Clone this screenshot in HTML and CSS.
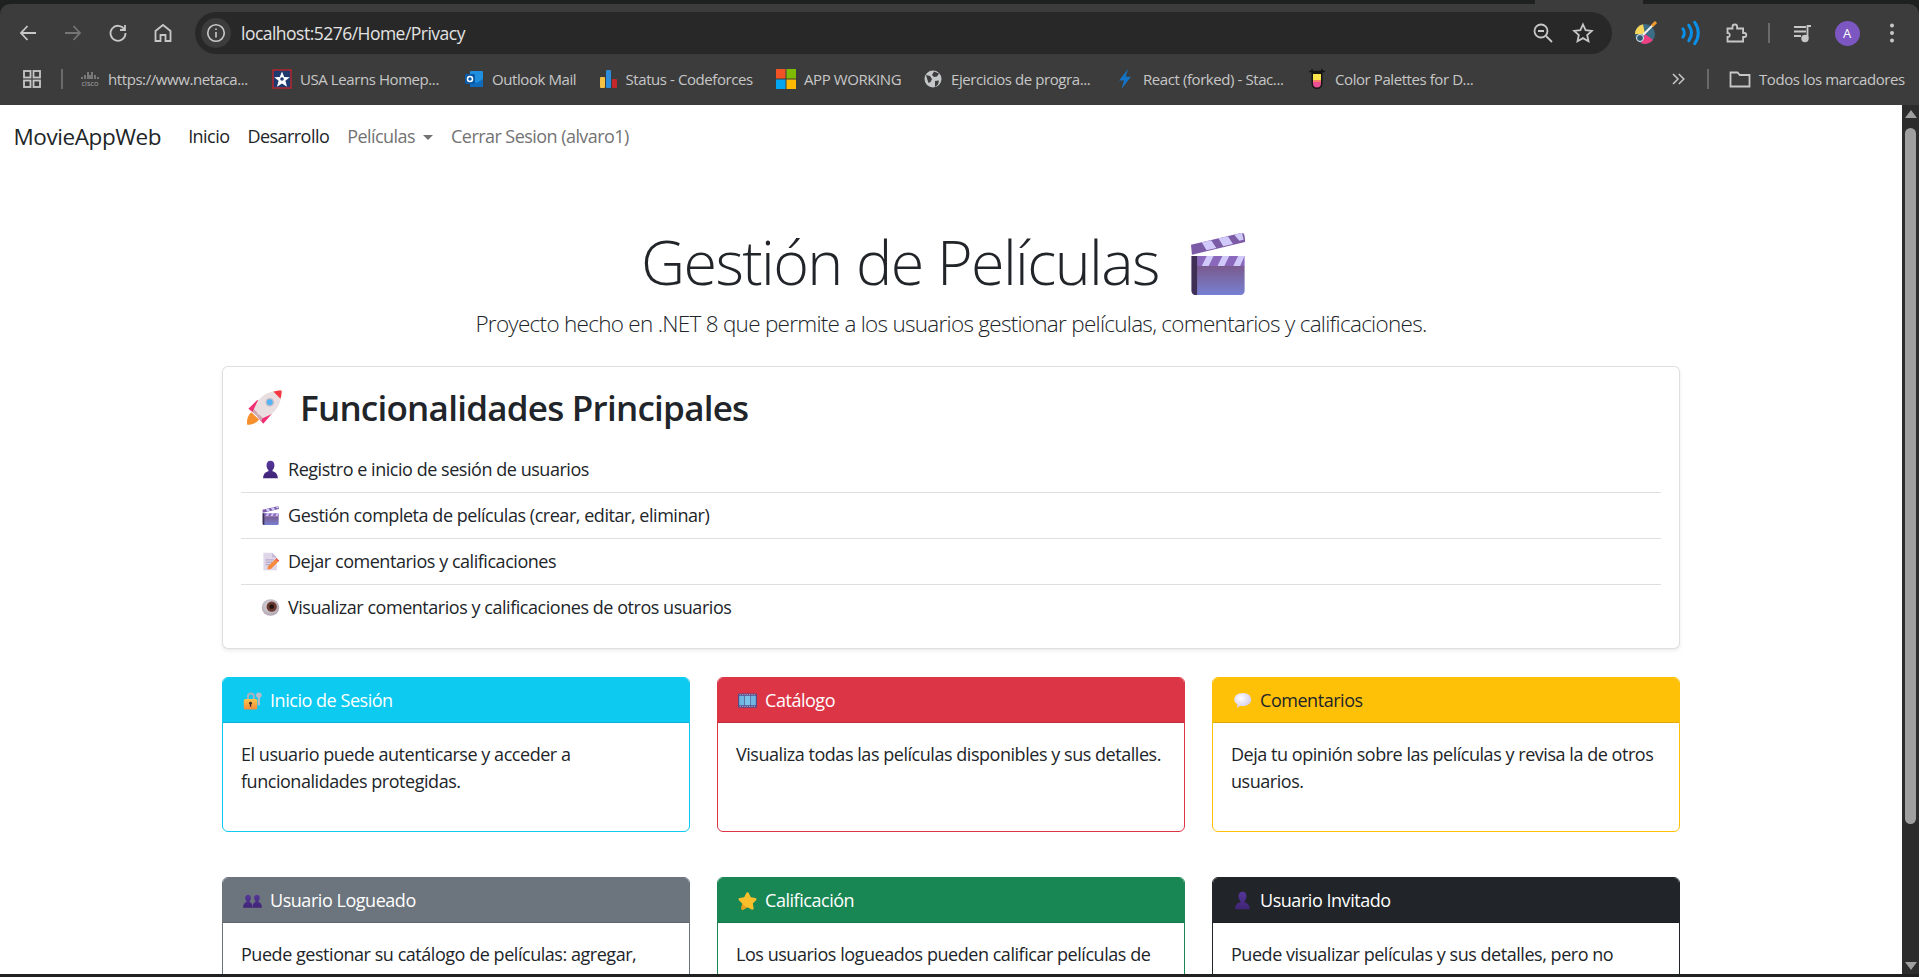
FILE: index.html
```html
<!DOCTYPE html>
<html lang="es">
<head>
    <meta charset="UTF-8">
    <meta name="viewport" content="width=device-width, initial-scale=1.0">
    <title>MovieAppWeb</title>
    <link rel="stylesheet" href="styles.css">
</head>
<body>

<!-- emoji drawings, used all over the page -->
<svg class="sprite" aria-hidden="true">
    <defs>
        <linearGradient id="clapBody" x1="0" y1="0" x2="0" y2="1">
            <stop offset="0" stop-color="#7a5a8e"/>
            <stop offset="1" stop-color="#7880d2"/>
        </linearGradient>
        <linearGradient id="lockBody" x1="0" y1="0" x2="0" y2="1">
            <stop offset="0" stop-color="#fdc54a"/>
            <stop offset="1" stop-color="#f58a3c"/>
        </linearGradient>
        <linearGradient id="bustFill" x1="0" y1="0" x2="0" y2="1">
            <stop offset="0" stop-color="#55379a"/>
            <stop offset="1" stop-color="#3f2477"/>
        </linearGradient>
        <radialGradient id="bubbleFill" cx=".4" cy=".35" r=".8">
            <stop offset="0" stop-color="#ffffff"/>
            <stop offset="1" stop-color="#c9bfe6"/>
        </radialGradient>
        <radialGradient id="eyeFill" cx=".45" cy=".4" r=".7">
            <stop offset="0" stop-color="#e4dfe4"/>
            <stop offset="1" stop-color="#a89ca8"/>
        </radialGradient>
    </defs>
    <symbol id="e-clapper" viewBox="0 0 28 32">
        <path d="M.5 6.500 26 .5c1-.2 1.500.2 1.700 1l.5 3.500L1 11.500z" fill="#7b5aa6"/>
        <path d="M6 5.200l4.800-1.100 2.600 4-5 1.100zM14.500 3.200l4.800-1.100 2.600 4-5 1.100zM22.500 1.300l4-.9.8 3.500-2.200.5z" fill="#d0c9fa"/>
        <path d="M.8 12.200h27v5.100H.8z" fill="#8a68bb"/>
        <path d="M6 17.300h3.500l2.500-5.100H8.500zM14 17.300h3.500l2.500-5.100h-3.500zM22 17.300h3.500l2.300-5.100h-3.300z" fill="#d0c9fa"/>
        <path d="M.8 17.300h27V30c0 1.200-.8 2-2 2h-23c-1.200 0-2-.8-2-2z" fill="url(#clapBody)"/>
        <path d="M.8 12.200h2.800V32h-.8c-1.200 0-2-.8-2-2z" fill="#3f2f55"/>
    </symbol>
    <symbol id="e-rocket" viewBox="0 0 32 32">
        <path d="M1 31c-.6-4 .4-8 3.500-10.500l6.500 6C8.500 29.800 5 31 1 31z" fill="#f5902c"/>
        <path d="M2 17.500 9.500 10l4 3-5 9.500zM14.500 30l7-8-3-4-9 6z" fill="#f02f74"/>
        <path d="M30 2c-9 0-16 3-20.500 9.500L6.500 18l7.500 7.500 6.500-3C27 18 30 11 30 2z" fill="#e9dfe1"/>
        <path d="M14 25.500 6.500 18l-1 2 7.500 7.500z" fill="#c9aeb6"/>
        <path d="M23 3c2-.6 4.500-1 7-1 0 2.500-.4 5-1 7z" fill="#f5383f"/>
        <circle cx="20" cy="12" r="3.600" fill="#c8bcc4"/>
        <circle cx="20" cy="12" r="2.500" fill="#56b4f6"/>
    </symbol>
    <symbol id="e-bust" viewBox="0 0 20 24">
        <path d="M10 1c3.300 0 5 2.400 5 5.500 0 2.800-1.200 5-2.500 6.400v1.300c3.500 1 6.500 3 6.800 8.800H.7C1 16.700 4 15.200 7.500 14.200v-1.300C6.200 11.500 5 9.300 5 6.500 5 3.400 6.700 1 10 1z" fill="url(#bustFill)"/>
    </symbol>
    <symbol id="e-busts" viewBox="0 0 26 22">
        <path d="M7 3c2.400 0 3.800 1.800 3.800 4.200 0 2-.9 3.600-1.900 4.700v1.300c2.300.6 3.900 2 4.100 7.800H.2c.2-5.800 2.400-7.200 4.700-7.800v-1.300C3.900 10.800 3 9.200 3 7.200 3 4.800 4.600 3 7 3z" fill="url(#bustFill)"/>
        <path d="M19 3c2.400 0 4 1.800 4 4.200 0 2-.9 3.600-1.900 4.700v1.300c2.300.6 4.700 2 4.700 7.800H13c.2-5.800 1.800-7.200 4.100-7.800v-1.300c-1-1.100-1.900-2.700-1.900-4.700C15.200 4.800 16.600 3 19 3z" fill="url(#bustFill)"/>
    </symbol>
    <symbol id="e-memo" viewBox="0 0 20 24">
        <path d="M1 1h11l6 6v16H1z" fill="#e0d6ea"/>
        <path d="M12 1l6 6h-6z" fill="#c6b9d6"/>
        <path d="M4 10h10M4 13h8M4 16h6" stroke="#a99bbd" stroke-width="1.200"/>
        <path d="M6 22l1-4 9-9 3.500 3.500-9 9z" fill="#f58a3c"/>
        <path d="M16 9l1.500-1.500 3.500 3.500-1.500 1.500z" fill="#f2503f"/>
    </symbol>
    <symbol id="e-eye" viewBox="0 0 24 24">
        <ellipse cx="12" cy="12" rx="11" ry="10.500" fill="url(#eyeFill)"/>
        <circle cx="13.500" cy="11" r="6.500" fill="#6b3a30"/>
        <circle cx="13.500" cy="11" r="3" fill="#241313"/>
    </symbol>
    <symbol id="e-lock" viewBox="0 0 24 24">
        <path d="M5 11V7a5 5 0 0 1 10 0v4h-2.400V7a2.600 2.600 0 0 0-5.200 0v4z" fill="#a9b0bd"/>
        <rect x="1" y="10" width="17" height="13.500" rx="2" fill="url(#lockBody)"/>
        <circle cx="9.500" cy="15.500" r="1.800" fill="#3a2a2a"/>
        <rect x="8.700" y="16" width="1.600" height="4" fill="#3a2a2a"/>
        <circle cx="20" cy="5.500" r="3.500" fill="#b7bcc8"/>
        <rect x="18.800" y="8" width="2.600" height="10" fill="#b7bcc8"/>
    </symbol>
    <symbol id="e-film" viewBox="0 0 24 20">
        <rect x="0" y="1" width="24" height="18" rx="1.500" fill="#554a86"/>
        <rect x="1.500" y="4" width="6.500" height="12" fill="#6fb7e0"/>
        <rect x="8.800" y="4" width="6.500" height="12" fill="#7cc3e8"/>
        <rect x="16" y="4" width="6.500" height="12" fill="#6fb7e0"/>
        <path d="M2 2.500h20M2 17.500h20" stroke="#c9c5e4" stroke-width="1" stroke-dasharray="1.500 1.500"/>
    </symbol>
    <symbol id="e-bubble" viewBox="0 0 24 22">
        <path d="M12.500 1.500C18.500 1.500 23 5 23 9.800s-4.500 8.300-10.500 8.300c-1.200 0-2.300-.1-3.300-.4L5 20.500l.5-4.700C3 14.300 1.500 12.200 1.500 9.800 1.500 5 6.500 1.500 12.500 1.500z" fill="url(#bubbleFill)"/>
    </symbol>
    <symbol id="e-star" viewBox="0 0 24 24">
        <path d="M12 1.500c.8 0 1.300.5 1.700 1.300l2.500 5.200 5.600.8c1.600.2 2.100 1.800 1 2.900l-4.100 4 1 5.700c.3 1.600-1.200 2.600-2.600 1.900L12 20.600l-5.100 2.700c-1.400.7-2.900-.3-2.600-1.900l1-5.700-4.100-4c-1.100-1.100-.6-2.700 1-2.900L7.800 8l2.500-5.200c.4-.8.900-1.300 1.700-1.300z" fill="#f9c02c"/>
        <path d="M12 20.600l-5.100 2.700c-1.400.7-2.900-.3-2.600-1.900l1-5.700c2 2.500 4 3.800 6.700 4.900z" fill="#e59f1d"/>
    </symbol>
</svg>

<!-- browser top -->
<div class="tabStrip">
    <div class="tabGap"></div>
</div>

<div class="toolbar">
    <div class="navIcons">
        <svg class="tIcon" viewBox="0 0 24 24"><path d="M20 12H5M11.500 5 5 12l6.500 7"/></svg>
        <svg class="tIcon dim" viewBox="0 0 24 24"><path d="M4 12h15M12.500 5 19 12l-6.500 7"/></svg>
        <svg class="tIcon" viewBox="0 0 24 24"><path d="M18.500 8.500A7.500 7.500 0 1 0 19.500 12M19 4v5h-5"/></svg>
        <svg class="tIcon" viewBox="0 0 24 24"><path d="M4.500 20V10L12 4l7.500 6v10h-5v-6h-5v6z"/></svg>
    </div>
    <div class="omnibox">
        <span class="infoChip">
            <svg class="tIcon small" viewBox="0 0 24 24"><circle cx="12" cy="12" r="9"/><path d="M12 11v6M12 7v1.800"/></svg>
        </span>
        <span class="urlText">localhost:5276/Home/Privacy</span>
        <span class="omniEnd">
            <svg class="tIcon" viewBox="0 0 24 24"><circle cx="10" cy="10" r="6.500"/><path d="M7 10h6M15 15l6 6"/></svg>
            <svg class="tIcon" viewBox="0 0 24 24"><path d="m12 3.500 2.600 5.700 6.200.7-4.600 4.200 1.300 6.100-5.500-3.100-5.500 3.100 1.300-6.100-4.600-4.200 6.200-.7z"/></svg>
        </span>
    </div>
    <div class="extIcons">
        <svg class="extPalette" viewBox="0 0 24 24">
            <circle cx="11" cy="13" r="10" fill="#3d6d86"/>
            <path d="M1 13a10 10 0 0 1 8-9.800L11 13z" fill="#f7d75a"/>
            <path d="M11 13l8 6a10 10 0 0 1-12 3z" fill="#ee3f82"/>
            <circle cx="6" cy="17" r="3.500" fill="#2f5870" stroke="#e9eef2"/>
            <path d="M9 14 20 3" stroke="#f2f2f2" stroke-width="2"/>
            <path d="M18 5l4-4" stroke="#f59a2c" stroke-width="3"/>
        </svg>
        <svg class="extWaves" viewBox="2 1 20 22">
            <path d="M6 8.500c1.500 2 1.500 5 0 7M11 5.500c2.800 4 2.800 9 0 13M16 3c4 5.500 4 12.500 0 18" fill="none" stroke="#0a8fe8" stroke-width="2.600" stroke-linecap="round"/>
        </svg>
        <svg class="tIcon" viewBox="0 0 24 24"><path d="M3.500 7.500h5V5.800a2.300 2.300 0 0 1 4.600 0v1.700h6V12h1.200a2 2 0 0 1 0 4h-1.200v4.500H3.500V16c3 .6 3-4.500 0-4z"/></svg>
        <span class="barSep"></span>
        <svg class="tIcon mediaIcon" viewBox="0 0 24 24"><path d="M3 6h12M3 10.500h12M3 15h7M20 5h-3.500v12"/><circle cx="14" cy="17.500" r="2.800" fill="#c7c7c7"/></svg>
        <span class="avatar">A</span>
        <svg class="dots" viewBox="0 0 6 24"><circle cx="3" cy="4.500" r="2"/><circle cx="3" cy="12" r="2"/><circle cx="3" cy="19.500" r="2"/></svg>
    </div>
</div>

<div class="bookmarks">
    <svg class="tIcon appsIcon" viewBox="0 0 24 24"><rect x="4" y="4" width="6.500" height="6.500"/><rect x="13.500" y="4" width="6.500" height="6.500"/><rect x="4" y="13.500" width="6.500" height="6.500"/><rect x="13.500" y="13.500" width="6.500" height="6.500"/></svg>
    <span class="barSep"></span>
    <div class="bookmarkList">
        <span class="bookmark">
            <svg class="fav" viewBox="0 0 20 20"><path d="M2 8v2M5 6v4M8 3v7M10 6v4M12 3v7M15 6v4M18 8v2" stroke="#a0a0a0" stroke-width="1.200"/><text x="10" y="17" class="ciscoText">cisco</text></svg>
            https://www.netaca...
        </span>
        <span class="bookmark">
            <svg class="fav" viewBox="0 0 20 20"><rect x="1" y="1" width="18" height="18" fill="#1f3a6e" stroke="#b3262e" stroke-width="1.500"/><path d="m10 2.500 2.200 5.400 5.600.3-4.400 3.500 1.600 6L10 14.500l-5 3.200 1.600-6-4.400-3.500 5.600-.3z" fill="#fff"/><circle cx="10" cy="10" r="1.800" fill="#1f3a6e"/></svg>
            USA Learns Homep...
        </span>
        <span class="bookmark">
            <svg class="fav" viewBox="0 0 20 20"><rect x="6" y="2" width="13" height="16" rx="1" fill="#1f8fe0"/><path d="M6 10l6.500 4 6.500-4v8H6z" fill="#0f6cbd"/><rect x="1" y="5" width="10" height="10" rx="1" fill="#0a5aa8"/><circle cx="6" cy="10" r="2.500" fill="none" stroke="#fff" stroke-width="1.500"/></svg>
            Outlook Mail
        </span>
        <span class="bookmark">
            <svg class="fav" viewBox="0 0 20 20"><rect x="2" y="8" width="5" height="11" rx="1" fill="#f6c244"/><rect x="8" y="1" width="5" height="18" rx="1" fill="#2d8cdb"/><rect x="14" y="10" width="5" height="9" rx="1" fill="#c3272b"/></svg>
            Status - Codeforces
        </span>
        <span class="bookmark">
            <svg class="fav" viewBox="0 0 20 20"><rect x="0" y="0" width="9.500" height="9.500" fill="#f25325"/><rect x="10.500" y="0" width="9.500" height="9.500" fill="#80bb03"/><rect x="0" y="10.500" width="9.500" height="9.500" fill="#03a5f0"/><rect x="10.500" y="10.500" width="9.500" height="9.500" fill="#ffb902"/></svg>
            APP WORKING
        </span>
        <span class="bookmark">
            <svg class="fav" viewBox="0 0 20 20"><circle cx="10" cy="10" r="8.500" fill="#c4c7c8"/><path d="M3 6l4 1 2 3-1.500 3-2 1-1-3zM11 2.500l5 2-2 3-3 .5-2-2zM12 12l4-.5-1 4-3 2.500z" fill="#3c3c3c"/></svg>
            Ejercicios de progra...
        </span>
        <span class="bookmark">
            <svg class="fav" viewBox="0 0 20 20"><path d="M13 0 4 11.500h5L6.500 20 16 7.800h-5.300z" fill="#1374c5"/></svg>
            React (forked) - Stac...
        </span>
        <span class="bookmark">
            <svg class="fav" viewBox="0 0 20 20"><path d="M2 2.500h16M5 0v2M15 0v2" stroke="#151515" stroke-width="1.600"/><path d="M4.500 3h11v11.500a5.500 5.500 0 0 1-11 0z" fill="#151515"/><path d="M6 5h8v6H6z" fill="#fbe34c"/><path d="M6 11h8v2H6z" fill="#f7806a"/><path d="M6 13h8v1.500a4 4 0 0 1-8 0z" fill="#ea4f92"/></svg>
            Color Palettes for D...
        </span>
    </div>
    <svg class="tIcon chevrons" viewBox="0 0 24 24"><path d="m6 6 6 6-6 6M13 6l6 6-6 6"/></svg>
    <span class="barSep"></span>
    <svg class="tIcon folderIcon" viewBox="0 0 24 24"><path d="M2.500 5.500h7l2.300 2.500h9.700v11.500h-19z"/></svg>
    <span class="allBookmarks">Todos los marcadores</span>
</div>

<!-- the page itself -->
<div class="viewport">
    <div class="page">
        <nav class="navbar">
            <a class="brand">MovieAppWeb</a>
            <a class="navLink">Inicio</a>
            <a class="navLink">Desarrollo</a>
            <a class="navLink muted caret">Películas</a>
            <a class="navLink muted">Cerrar Sesion (alvaro1)</a>
        </nav>

        <div class="container">
            <div class="hero">
                <h1 class="heroTitle">Gestión de Películas <svg class="clapperBig"><use href="#e-clapper"/></svg></h1>
                <p class="lead">Proyecto hecho en .NET 8 que permite a los usuarios gestionar películas, comentarios y calificaciones.</p>
            </div>

            <div class="mainCard">
                <h2 class="mainTitle"><svg class="rocket"><use href="#e-rocket"/></svg>Funcionalidades Principales</h2>
                <ul class="featureList">
                    <li><svg class="emoji"><use href="#e-bust"/></svg>Registro e inicio de sesión de usuarios</li>
                    <li><svg class="emoji"><use href="#e-clapper"/></svg>Gestión completa de películas (crear, editar, eliminar)</li>
                    <li><svg class="emoji"><use href="#e-memo"/></svg>Dejar comentarios y calificaciones</li>
                    <li><svg class="emoji"><use href="#e-eye"/></svg>Visualizar comentarios y calificaciones de otros usuarios</li>
                </ul>
            </div>

            <div class="cardGrid">
                <div class="card info">
                    <div class="cardHeader"><svg class="emoji"><use href="#e-lock"/></svg>Inicio de Sesión</div>
                    <div class="cardBody"><p>El usuario puede autenticarse y acceder a funcionalidades protegidas.</p></div>
                </div>
                <div class="card danger">
                    <div class="cardHeader"><svg class="emoji"><use href="#e-film"/></svg>Catálogo</div>
                    <div class="cardBody"><p>Visualiza todas las películas disponibles y sus detalles.</p></div>
                </div>
                <div class="card warning">
                    <div class="cardHeader"><svg class="emoji"><use href="#e-bubble"/></svg>Comentarios</div>
                    <div class="cardBody"><p>Deja tu opinión sobre las películas y revisa la de otros usuarios.</p></div>
                </div>
                <div class="card secondary">
                    <div class="cardHeader"><svg class="emoji"><use href="#e-busts"/></svg>Usuario Logueado</div>
                    <div class="cardBody"><p>Puede gestionar su catálogo de películas: agregar,</p></div>
                </div>
                <div class="card success">
                    <div class="cardHeader"><svg class="emoji"><use href="#e-star"/></svg>Calificación</div>
                    <div class="cardBody"><p>Los usuarios logueados pueden calificar películas de</p></div>
                </div>
                <div class="card dark">
                    <div class="cardHeader"><svg class="emoji"><use href="#e-bust"/></svg>Usuario Invitado</div>
                    <div class="cardBody"><p>Puede visualizar películas y sus detalles, pero no</p></div>
                </div>
            </div>
        </div>
    </div>

    <div class="scrollbar">
        <span class="arrowUp"></span>
        <span class="thumb"></span>
        <span class="arrowDown"></span>
    </div>
</div>

<div class="bottomStrip"></div>

</body>
</html>
```

FILE: styles.css
```css
* {
    box-sizing: border-box;
}

html, body {
    height: 100%;
}

body {
    margin: 0;
    display: flex;
    flex-direction: column;
    overflow: hidden;
    background-color: #1f2020;
    color: #212529;
    font-family: "Open Sans", "Liberation Sans", sans-serif;
    font-size: 18px;
    line-height: 27px;
    letter-spacing: -0.46px;
}

.sprite {
    display: block;
    width: 0;
    height: 0;
}

/* browser top */
.tabStrip {
    height: 4px;
    display: flex;
    justify-content: flex-end;
}

.tabGap {
    width: 108px;
    margin-right: 276px;
    background-color: #3c3c3c;
}

.toolbar {
    height: 58px;
    padding-top: 8px;
    display: flex;
    align-items: flex-start;
    background-color: #3c3c3c;
    border-radius: 10px 10px 0 0;
}

.tIcon {
    width: 24px;
    height: 24px;
    fill: none;
    stroke: #c7c7c7;
    stroke-width: 1.8;
    flex: none;
}

.tIcon.dim {
    stroke: #757575;
}

.tIcon.small {
    width: 22px;
    height: 22px;
}

.navIcons {
    width: 195px;
    height: 42px;
    padding-left: 16px;
    display: flex;
    align-items: center;
    gap: 21px;
}

.omnibox {
    width: 1417px;
    height: 42px;
    padding: 0 17px 0 6px;
    display: flex;
    align-items: center;
    background-color: #282828;
    border-radius: 21px;
}

.infoChip {
    width: 30px;
    height: 30px;
    display: flex;
    align-items: center;
    justify-content: center;
    background-color: #3c3c3c;
    border-radius: 50%;
}

.urlText {
    margin-left: 10px;
    color: #e3e3e3;
    font-size: 17.5px;
    letter-spacing: -0.52px;
}

.omniEnd {
    margin-left: auto;
    display: flex;
    gap: 16px;
}

.extIcons {
    height: 42px;
    flex: 1;
    padding-left: 22px;
    display: flex;
    align-items: center;
}

.extPalette {
    width: 24px;
    height: 24px;
    margin-right: 20px;
}

.extWaves {
    width: 24px;
    height: 26px;
    margin-right: 22px;
}

.extIcons .barSep {
    margin: 0 21px 0 20px;
}

.mediaIcon {
    margin-right: 19.5px;
}

.barSep {
    width: 2px;
    height: 20px;
    flex: none;
    background-color: #6a6a6a;
}

.avatar {
    width: 25px;
    height: 25px;
    margin-right: 29.5px;
    flex: none;
    display: flex;
    align-items: center;
    justify-content: center;
    background-color: #7d57c1;
    border-radius: 50%;
    color: #fff;
    font-size: 13px;
    letter-spacing: 0;
}

.dots {
    width: 6px;
    height: 24px;
    flex: none;
    fill: #c7c7c7;
}

.bookmarks {
    height: 43px;
    padding: 0 0 9px 20px;
    display: flex;
    align-items: center;
    background-color: #3c3c3c;
    color: #c7c7c7;
    font-size: 15px;
    letter-spacing: -0.42px;
}

.appsIcon {
    margin-right: 17px;
}

.bookmarkList {
    display: grid;
    grid-template-columns: 192px 192px 133.5px 178.5px 147px 192px 192px 1fr;
    margin-left: 17px;
    width: 1588px;
    flex: none;
}

.bookmark {
    display: flex;
    align-items: center;
    gap: 8px;
    white-space: nowrap;
}

.fav {
    width: 20px;
    height: 20px;
    flex: none;
}

.ciscoText {
    font-size: 7.5px;
    fill: #a0a0a0;
    text-anchor: middle;
    letter-spacing: 0;
}

.chevrons {
    width: 20px;
    height: 20px;
    margin-right: 19px;
}

.folderIcon {
    margin: 0 7px 0 19px;
}

.allBookmarks {
    white-space: nowrap;
}

/* page area */
.viewport {
    flex: 1;
    min-height: 0;
    display: flex;
}

.page {
    flex: 1;
    min-width: 0;
    overflow: hidden;
    background-color: #fff;
}

.scrollbar {
    width: 17px;
    flex: none;
    padding: 5px 0 4px;
    display: flex;
    flex-direction: column;
    align-items: center;
    background-color: #2c2c2c;
}

.arrowUp {
    width: 0;
    height: 0;
    border-left: 6px solid transparent;
    border-right: 6px solid transparent;
    border-bottom: 8px solid #9f9f9f;
}

.thumb {
    width: 11px;
    height: 696px;
    margin-top: 10px;
    background-color: #9f9f9f;
    border-radius: 6px;
}

.arrowDown {
    width: 0;
    height: 0;
    margin-top: auto;
    border-left: 6px solid transparent;
    border-right: 6px solid transparent;
    border-top: 8px solid #9f9f9f;
}

.bottomStrip {
    height: 3px;
    flex: none;
    background-color: #1f2020;
}

/* navbar */
.navbar {
    height: 63px;
    padding: 0 13.5px;
    display: flex;
    align-items: center;
}

.brand {
    margin-right: 18px;
    font-size: 22.5px;
    letter-spacing: -0.42px;
    color: #212529;
}

.navLink {
    padding: 0 9px;
    color: #212529;
    letter-spacing: -0.55px;
}

.navLink.muted {
    color: #737373;
}

.navLink.caret::after {
    content: "";
    display: inline-block;
    margin-left: 8px;
    vertical-align: 3px;
    border-top: 5px solid;
    border-left: 5px solid transparent;
    border-right: 5px solid transparent;
}

/* content */
.container {
    width: 1458px;
    margin: 0 auto;
}

.hero {
    padding-top: 56px;
    margin-bottom: 26px;
    text-align: center;
}

.heroTitle {
    margin: 0 0 7px;
    font-size: 61px;
    font-weight: 300;
    line-height: 75.6px;
    letter-spacing: -1.6px;
}

.clapperBig {
    width: 55px;
    height: 63px;
    margin: 0 16px 0 17px;
    vertical-align: -10px;
}

.lead {
    margin: 0;
    font-size: 22.5px;
    font-weight: 300;
    line-height: 33.75px;
    letter-spacing: -0.72px;
}

.mainCard {
    padding: 18px;
    margin-bottom: 28px;
    background-color: #fff;
    border: 1px solid rgba(0, 0, 0, 0.125);
    border-radius: 6px;
    box-shadow: 0 2px 4px rgba(0, 0, 0, 0.075);
}

.mainTitle {
    height: 46px;
    margin: 0 0 16px;
    padding-bottom: 2px;
    font-size: 35px;
    font-weight: 600;
    line-height: 43.2px;
    letter-spacing: -0.75px;
    display: flex;
    align-items: center;
}

.rocket {
    width: 38px;
    height: 38px;
    margin: 0 16px 0 5px;
}

.featureList {
    margin: 0;
    padding: 0;
    list-style: none;
}

.featureList li {
    padding: 9px 18px;
    height: 46px;
    border-bottom: 1px solid rgba(0, 0, 0, 0.125);
}

.featureList li:last-child {
    height: 45px;
    border-bottom: 0;
}

.emoji {
    width: 19px;
    height: 19px;
    margin: 0 8px 0 2px;
    vertical-align: -3px;
}

.cardGrid {
    display: grid;
    grid-template-columns: repeat(3, 1fr);
    column-gap: 27px;
    row-gap: 45px;
}

.card {
    border: 1px solid;
    border-radius: 6px;
    overflow: hidden;
}

.cardHeader {
    height: 46px;
    margin: -1px -1px 0;
    padding: 10px 19px;
    border-bottom: 1px solid rgba(0, 0, 0, 0.125);
    color: #fff;
}

.cardBody {
    padding: 18px;
}

.cardBody p {
    margin: 0 0 18px;
    min-height: 54px;
}

.card.info { border-color: #0dcaf0; }
.card.info .cardHeader { background-color: #0dcaf0; }
.card.danger { border-color: #dc3545; }
.card.danger .cardHeader { background-color: #dc3545; }
.card.warning { border-color: #ffc107; }
.card.warning .cardHeader { background-color: #ffc107; color: #212529; }
.card.secondary { border-color: #6c757d; }
.card.secondary .cardHeader { background-color: #6c757d; }
.card.success { border-color: #198754; }
.card.success .cardHeader { background-color: #198754; }
.card.dark { border-color: #212529; }
.card.dark .cardHeader { background-color: #212529; }
```
